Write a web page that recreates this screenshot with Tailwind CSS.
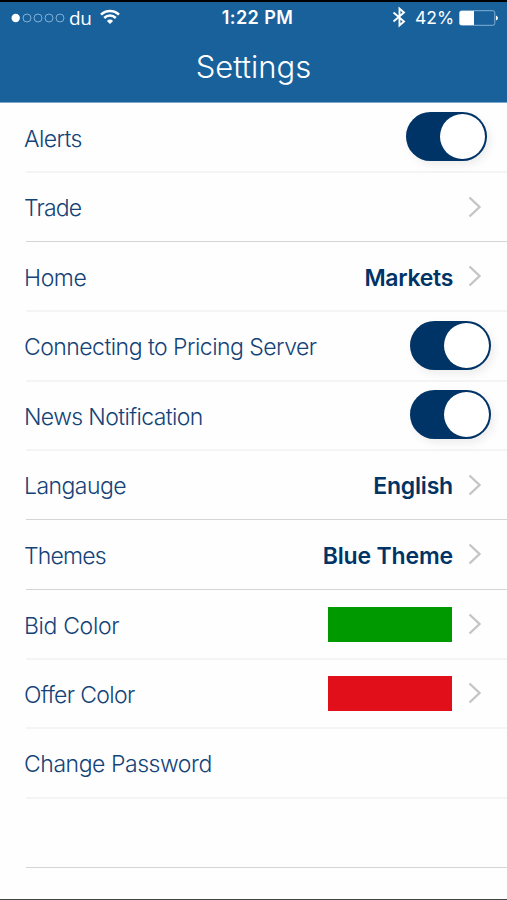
<!DOCTYPE html>
<html lang="en">
<head>
    <meta charset="UTF-8">
    <meta name="viewport" content="width=device-width, initial-scale=1.0">
    <title>Settings</title>
    <script src="https://cdn.jsdelivr.net/npm/@tailwindcss/browser@4"></script>
</head>
<body class="h-[900px] flex flex-col overflow-hidden bg-[#fefefe] border-b border-[#444] font-['Inter','Liberation_Sans',sans-serif] text-[#144378]">
    <header class="h-[103px] shrink-0 bg-[#18619b] border-t-2 border-t-black border-b border-b-[#7ba7cb] text-white">
        <!-- Status bar -->
        <div class="h-8 grid grid-cols-3 items-center pl-[11px] pr-[9px] text-[18px] leading-8">
            <div class="flex items-center">
                <svg class="w-[54px] h-[10px]" viewBox="0 0 54 10" fill="none" stroke="#7fb0d8" stroke-width="1">
                    <circle cx="4.7" cy="5" r="4.2" fill="#fff" stroke="none" />
                    <circle cx="16" cy="5" r="4" />
                    <circle cx="27" cy="5" r="4" />
                    <circle cx="38" cy="5" r="4" />
                    <circle cx="49" cy="5" r="4" />
                </svg>
                <span class="ml-1 font-['Open_Sans',sans-serif] text-[19px] tracking-[-0.3px]">du</span>
                <svg class="ml-2 w-5 h-4 -mt-0.5" viewBox="0 0 20 16" fill="none" stroke="#fff" stroke-width="2.5">
                    <path d="M1 5.6A12.8 12.8 0 0 1 19 5.6" />
                    <path d="M4.2 9A8.2 8.2 0 0 1 15.8 9" />
                    <path d="M6.9 11.9a4.4 4.4 0 0 1 6.2 0L10 15z" fill="#fff" stroke="none" />
                </svg>
            </div>
            <div class="pl-1.5 text-center font-semibold text-[18px] tracking-[0.4px]">1:22 PM</div>
            <div class="flex items-center justify-end">
                <svg class="w-[14px] h-[22px] mr-[9px] -mt-0.5" viewBox="0 0 14 22" fill="none" stroke="#fff" stroke-width="1.9">
                    <path d="M1.5 6.5L12 15.5L7.5 19.5V2.5l4.5 4L1.5 15.5" />
                </svg>
                <span class="text-[17.5px] tracking-[-0.1px]">42%</span>
                <svg class="ml-[5px] w-[39px] h-4" viewBox="0 0 39 16" fill="none">
                    <rect x="0.8" y="0.7" width="35" height="14.6" rx="2" stroke="#83b1d6" />
                    <path d="M2 1h13v14H2a1.5 1.5 0 0 1-1.5-1.5v-11A1.5 1.5 0 0 1 2 1z" fill="#fff" />
                    <path d="M37 5.5q2 1 2 2.5t-2 2.5z" fill="#fff" />
                </svg>
            </div>
        </div>
        <h1 class="pt-[13px] text-center text-[31px] leading-10 font-light">Settings</h1>
    </header>

    <!-- Settings list -->
    <ul class="ml-[26px] text-[23px] leading-8 font-light">
        <li class="h-[70px] border-b-2 border-[#f4f4f4] pt-0.5 pr-5 flex items-center justify-between">
            <span class="-ml-[2px] mt-0.5 tracking-[-0.6px]">Alerts</span>
            <span class="w-[81px] h-[49px] -mt-1 rounded-full bg-[#003366] pr-0.5 flex items-center justify-end shadow-[3px_4px_8px_rgba(0,0,0,0.07)]">
                <span class="size-[45px] rounded-full bg-white"></span>
            </span>
        </li>
        <li class="h-[69px] border-b border-[#d5d5d5] pt-0.5 pr-[25px] flex items-center justify-between">
            <span class="-ml-[2px] tracking-[-0.85px]">Trade</span>
            <svg class="w-[14px] h-[22px] -mt-0.5" viewBox="0 0 14 22" fill="none" stroke="#c5c5c8" stroke-width="2.4"><path d="M1.5 1.5L11.5 11L1.5 20.5" /></svg>
        </li>
        <li class="h-[70px] border-b-2 border-[#f4f4f4] pt-0.5 pr-[25px] flex items-center">
            <span class="-ml-[2px] mt-0.5 tracking-[-0.4px]">Home</span>
            <span class="ml-auto mr-[15px] mt-0.5 font-semibold text-[#003366] tracking-[-0.3px]">Markets</span>
            <svg class="w-[14px] h-[22px] -mt-0.5" viewBox="0 0 14 22" fill="none" stroke="#c5c5c8" stroke-width="2.4"><path d="M1.5 1.5L11.5 11L1.5 20.5" /></svg>
        </li>
        <li class="h-[70px] border-b-2 border-[#f4f4f4] pt-0.5 pr-4 flex items-center justify-between">
            <span class="-ml-[2px] tracking-[-0.53px]">Connecting to Pricing Server</span>
            <span class="w-[81px] h-[49px] -mt-1 rounded-full bg-[#003366] pr-0.5 flex items-center justify-end shadow-[3px_4px_8px_rgba(0,0,0,0.07)]">
                <span class="size-[45px] rounded-full bg-white"></span>
            </span>
        </li>
        <li class="h-[69px] border-b-2 border-[#f4f4f4] pt-0.5 pr-4 flex items-center justify-between">
            <span class="-ml-[2px] tracking-[-0.62px]">News Notification</span>
            <span class="w-[81px] h-[49px] -mt-1 rounded-full bg-[#003366] pr-0.5 flex items-center justify-end shadow-[3px_4px_8px_rgba(0,0,0,0.07)]">
                <span class="size-[45px] rounded-full bg-white"></span>
            </span>
        </li>
        <li class="h-[69px] border-b border-[#d5d5d5] pt-0.5 pr-[25px] flex items-center">
            <span class="-ml-[2px] tracking-[-0.55px]">Langauge</span>
            <span class="ml-auto mr-[15px] font-semibold text-[#003366] tracking-[-0.2px]">English</span>
            <svg class="w-[14px] h-[22px] -mt-0.5" viewBox="0 0 14 22" fill="none" stroke="#c5c5c8" stroke-width="2.4"><path d="M1.5 1.5L11.5 11L1.5 20.5" /></svg>
        </li>
        <li class="h-[70px] border-b border-[#d5d5d5] pt-0.5 pr-[25px] flex items-center">
            <span class="-ml-[2px] tracking-[-0.85px]">Themes</span>
            <span class="ml-auto mr-[15px] font-semibold text-[#003366] tracking-[-0.15px]">Blue Theme</span>
            <svg class="w-[14px] h-[22px] -mt-1" viewBox="0 0 14 22" fill="none" stroke="#c5c5c8" stroke-width="2.4"><path d="M1.5 1.5L11.5 11L1.5 20.5" /></svg>
        </li>
        <li class="h-[70px] border-b-2 border-[#f4f4f4] pt-0.5 pr-[25px] flex items-center">
            <span class="-ml-[2px] mt-0.5 tracking-[-0.35px]">Bid Color</span>
            <span class="ml-auto mr-4 w-[124px] h-[35px] -mt-0.5 bg-[#009900]"></span>
            <svg class="w-[14px] h-[22px] -mt-0.5" viewBox="0 0 14 22" fill="none" stroke="#c5c5c8" stroke-width="2.4"><path d="M1.5 1.5L11.5 11L1.5 20.5" /></svg>
        </li>
        <li class="h-[69px] border-b-2 border-[#f4f4f4] pt-0.5 pr-[25px] flex items-center">
            <span class="-ml-[2px] tracking-[-0.65px]">Offer Color</span>
            <span class="ml-auto mr-4 w-[124px] h-[35px] -mt-0.5 bg-[#e00f19]"></span>
            <svg class="w-[14px] h-[22px] -mt-1" viewBox="0 0 14 22" fill="none" stroke="#c5c5c8" stroke-width="2.4"><path d="M1.5 1.5L11.5 11L1.5 20.5" /></svg>
        </li>
        <li class="h-[70px] border-b-2 border-[#f4f4f4] pt-0.5 flex items-center">
            <span class="-ml-[2px] tracking-[-0.45px]">Change Password</span>
        </li>
        <li class="h-[69px] border-b border-[#d5d5d5]"></li>
    </ul>
</body>
</html>
